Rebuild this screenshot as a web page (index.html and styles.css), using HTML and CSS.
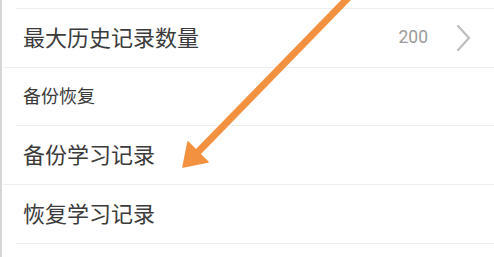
FILE: index.html
```html
<!DOCTYPE html>
<html lang="zh-CN">
  <head>
    <meta charset="UTF-8" />
    <meta name="viewport" content="width=device-width, initial-scale=1.0" />
    <title>设置</title>
    <link rel="stylesheet" href="styles.css">
  </head>
  <body>
    <div class="settings">
      <div class="settings__top"></div>
      <div class="settings__row settings__row--full">
        <span class="settings__label">最大历史记录数量</span>
        <span class="settings__value">200</span>
        <svg class="settings__chevron" width="16" height="28" viewBox="0 0 16 28">
          <polyline points="2,2 13,14 2,26" fill="none" stroke="#bdbdbd" stroke-width="2.2" stroke-linecap="round" stroke-linejoin="round" />
        </svg>
      </div>
      <div class="settings__row settings__row--head">
        <span class="settings__title">备份恢复</span>
      </div>
      <div class="settings__row settings__row--full">
        <span class="settings__label">备份学习记录</span>
      </div>
      <div class="settings__row">
        <span class="settings__label">恢复学习记录</span>
      </div>
    </div>
    <svg class="arrow" width="494" height="257" viewBox="0 0 494 257">
      <line x1="350" y1="-4" x2="197" y2="153" stroke="#f2913f" stroke-width="7" />
      <polygon points="183,167 188,142 208,162" fill="#f2913f" stroke="#f2913f" stroke-width="1.5" stroke-linejoin="round" />
    </svg>
  </body>
</html>
```

FILE: styles.css
```css
*,
*::before,
*::after {
  box-sizing: border-box;
  margin: 0;
  padding: 0;
}

:root {
  --text: #3b3b3b;
  --muted: #9a9a9a;
  --line: #eeeeee;
  --edge: #d6d6d6;
}
body {
  position: relative;
  width: 494px;
  height: 257px;
  overflow: hidden;
  background: #fff;
  border-left: 2px solid var(--edge);
  font-family: "Noto Sans CJK SC", "Noto Sans", sans-serif;
  color: var(--text);
}
.settings__top {
  height: 9px;
  margin-left: 14px;
  border-bottom: 1px solid var(--line);
}
.settings__row {
  display: flex;
  align-items: center;
  height: 59px;
  margin-left: 14px;
  padding-left: 7px;
  padding-right: 22px;
  border-bottom: 1px solid var(--line);
}
.settings__row--full {
  margin-left: 1px;
  padding-left: 20px;
}
.settings__row--head {
  height: 58px;
}
.settings__label {
  flex: 1;
  font-size: 22px;
  line-height: 1;
  padding-bottom: 5px;
}
.settings__title {
  font-size: 18px;
  line-height: 1;
  padding-bottom: 3px;
}
.settings__value {
  font-family: Roboto, "Noto Sans", sans-serif;
  font-size: 17.5px;
  color: var(--muted);
  margin-right: 28px;
  padding-bottom: 2px;
}
.settings__chevron {
  display: block;
}
.arrow {
  position: absolute;
  top: 0;
  left: -2px;
  pointer-events: none;
}
```
